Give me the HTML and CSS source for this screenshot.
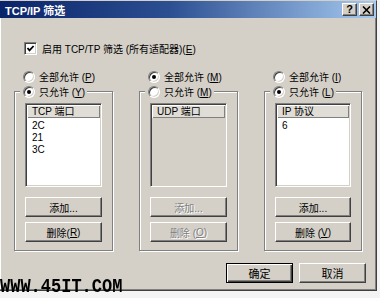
FILE: index.html
```html
<!DOCTYPE html>
<html>
<head>
<meta charset="utf-8">
<link rel="stylesheet" href="styles.css">
</head>
<body>
<div class="window">
  <div class="titlebar">
    <span class="title">TCP/IP 筛选</span>
    <div class="caption-btns">
      <span class="cbtn help">?</span>
      <span class="cbtn close"><svg width="9" height="8" viewBox="0 0 9 8"><path d="M1 0.5 L8 7.5 M8 0.5 L1 7.5" stroke="#000" stroke-width="1.6" fill="none"/></svg></span>
    </div>
  </div>
  <div class="body">
    <div class="check-row">
      <span class="checkbox"><svg width="9" height="9" viewBox="0 0 9 9"><path d="M1.5 4 L3.5 6.3 L7.6 2" stroke="#000" stroke-width="1.8" fill="none"/></svg></span>
      <span>启用 TCP/TP 筛选 (所有适配器)(<u>E</u>)</span>
    </div>
    <div class="columns">
      <div class="col col-a">
        <div class="radio-row top-radio"><span class="radio"></span><span>全部允许 (<u>P</u>)</span></div>
        <fieldset class="group">
          <legend class="radio-row"><span class="radio checked"></span><span>只允许 (<u>Y</u>)</span></legend>
          <div class="listbox">
            <div class="list-header">TCP 端口</div>
            <ul class="list-items"><li>2C</li><li>21</li><li>3C</li></ul>
          </div>
          <button class="btn add">添加...</button>
          <button class="btn del">删除(<u>R</u>)</button>
        </fieldset>
      </div>
      <div class="col col-b">
        <div class="radio-row top-radio"><span class="radio checked"></span><span>全部允许 (<u>M</u>)</span></div>
        <fieldset class="group">
          <legend class="radio-row"><span class="radio"></span><span>只允许 (<u>M</u>)</span></legend>
          <div class="listbox disabled">
            <div class="list-header">UDP 端口</div>
            <ul class="list-items"></ul>
          </div>
          <button class="btn add disabled-btn">添加...</button>
          <button class="btn del disabled-btn">删除 (<u>O</u>)</button>
        </fieldset>
      </div>
      <div class="col col-c">
        <div class="radio-row top-radio"><span class="radio"></span><span>全部允许 (<u>I</u>)</span></div>
        <fieldset class="group">
          <legend class="radio-row"><span class="radio checked"></span><span>只允许 (<u>L</u>)</span></legend>
          <div class="listbox">
            <div class="list-header">IP 协议</div>
            <ul class="list-items"><li>6</li></ul>
          </div>
          <button class="btn add">添加...</button>
          <button class="btn del">删除 (<u>V</u>)</button>
        </fieldset>
      </div>
    </div>
    <div class="footer">
      <button class="btn default">确定</button>
      <button class="btn cancel">取消</button>
    </div>
  </div>
</div>
<div class="watermark">WWW.45IT.COM</div>
</body>
</html>
```
FILE: styles.css
```css
html, body {
  margin: 0;
  padding: 0;
  background: #f4f4f4;
}
body {
  width: 380px;
  height: 298px;
  position: relative;
  overflow: hidden;
  font-family: "Liberation Sans", "Noto Sans CJK SC", sans-serif;
  font-size: 10px;
  color: #000;
}
.window {
  width: 377px;
  box-sizing: border-box;
  background: #d4d0c8;
  border-top: 1px solid #d4d0c8;
  border-right: 1px solid #404040;
  border-bottom: 1px solid #404040;
  box-shadow: inset -1px -1px #808080, inset 1px 0 #fff;
}
.titlebar {
  height: 17px;
  display: flex;
  align-items: center;
  justify-content: space-between;
  background: linear-gradient(90deg, #0a246a 0%, #2c4f92 45%, #a6caf0 100%);
  padding: 0 2px 0 5px;
  color: #fff;
  font-weight: bold;
  font-size: 11px;
}
.caption-btns {
  display: flex;
  gap: 2px;
}
.cbtn {
  width: 15px;
  height: 13px;
  box-sizing: border-box;
  background: #d4d0c8;
  border: 1px solid;
  border-color: #fff #404040 #404040 #fff;
  box-shadow: inset -1px -1px #808080;
  display: flex;
  align-items: center;
  justify-content: center;
  color: #000;
  font-size: 11px;
  font-weight: bold;
  line-height: 11px;
}
.body {
  padding: 0 10px 7px 0;
}
.check-row {
  margin-top: 23px;
  height: 14px;
  display: flex;
  align-items: center;
  gap: 5px;
  padding-left: 24px;
}
.checkbox {
  width: 13px;
  height: 13px;
  box-sizing: border-box;
  background: #fff;
  border: 1px solid;
  border-color: #808080 #fff #fff #808080;
  box-shadow: inset 1px 1px #404040, inset -1px -1px #d4d0c8;
  display: flex;
  align-items: center;
  justify-content: center;
}
.columns {
  display: flex;
  gap: 26px;
  padding-left: 14px;
  margin-top: 14px;
}
.col {
  display: flex;
  flex-direction: column;
}
.col-a, .col-b { width: 99px; }
.col-c { width: 98px; }
.radio-row {
  height: 15px;
  display: flex;
  align-items: center;
  gap: 4px;
  white-space: nowrap;
}
.top-radio {
  padding-left: 9px;
}
.radio {
  width: 12px;
  height: 12px;
  box-sizing: border-box;
  border-radius: 50%;
  background: #fff;
  border: 1px solid;
  border-color: #808080 #fff #fff #808080;
  box-shadow: inset 1px 1px #404040, inset -1px -1px #d4d0c8;
  position: relative;
  flex: none;
}
.radio.checked::after {
  content: "";
  position: absolute;
  left: 3px;
  top: 3px;
  width: 4px;
  height: 4px;
  border-radius: 50%;
  background: #000;
}
.group {
  margin: 0;
  padding: 4px 10px 8px;
  min-width: 0;
  border: 1px solid #808080;
  box-shadow: inset 1px 1px #fff, 1px 1px #fff;
  display: flex;
  flex-direction: column;
}
.group legend {
  padding: 0 2px 0 3px;
  margin-left: -5px;
  background: #d4d0c8;
}
.listbox {
  height: 84px;
  box-sizing: border-box;
  border: 1px solid;
  border-color: #808080 #fff #fff #808080;
  box-shadow: inset 1px 1px #404040, inset -1px -1px #d4d0c8;
  padding: 1px;
  background: #fff;
}
.listbox.disabled {
  background: #d4d0c8;
}
.list-header {
  height: 13px;
  line-height: 13px;
  padding-left: 5px;
  background: #e0ddd6;
  box-shadow: inset 1px 1px #fff, inset -1px -1px #808080;
  font-size: 10px;
  white-space: nowrap;
}
.list-items {
  list-style: none;
  margin: 0;
  padding: 2px 0 0 5px;
}
.list-items li {
  line-height: 12px;
  height: 12px;
  font-size: 10px;
}
.btn {
  font-family: inherit;
  font-size: 10px;
  color: #000;
  height: 20px;
  padding: 0;
  box-sizing: border-box;
  background: #d4d0c8;
  border: 1px solid;
  border-color: #fff #404040 #404040 #fff;
  box-shadow: inset -1px -1px #808080;
  display: flex;
  align-items: center;
  justify-content: center;
}
.btn.add {
  margin-top: 10px;
  width: 100%;
}
.btn.del {
  margin-top: 5px;
  width: 100%;
}
.disabled-btn {
  color: #808080;
  text-shadow: 1px 1px #fff;
}
.footer {
  display: flex;
  justify-content: flex-end;
  gap: 6px;
  margin-top: 12px;
}
.footer .btn {
  width: 67px;
  font-size: 11px;
}
.btn.default {
  border: 1px solid #000;
  box-shadow: inset 1px 1px #fff, inset -1px -1px #404040, inset -2px -2px #808080;
}
.watermark {
  position: absolute;
  left: 0;
  top: 280px;
  font-family: "Liberation Mono", monospace;
  font-weight: bold;
  font-size: 17px;
  line-height: 18px;
  color: #000;
  transform-origin: left bottom;
  transform: scaleY(1.15);
}
```
